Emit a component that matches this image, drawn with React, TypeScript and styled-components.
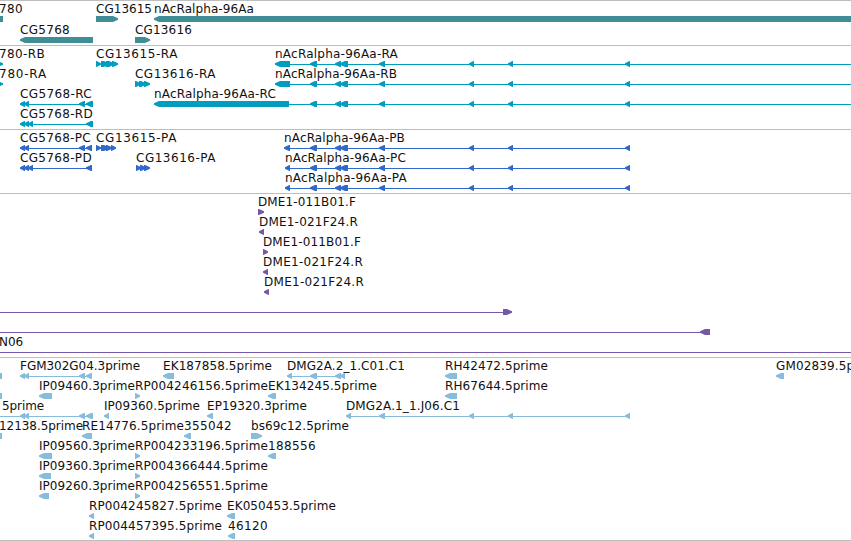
import styled, { createGlobalStyle } from "styled-components";

type Direction = "left" | "right";
type Exon = [start: number, end: number];

type Feature = {
  name?: string;
  // start and end of the label
  label?: [number, number];
  exons: Exon[];
  // intron line, defaults to the span of the exons
  line?: [number, number];
  direction?: Direction;
};

type TrackData = {
  id: string;
  color: string;
  rowGap?: number;
  bottom: number;
  rows: Feature[][];
};

const VIEW_WIDTH = 851;
const FONT = '12px "DejaVu Sans", sans-serif';

const transcriptExons: Exon[] = [
  [310, 317],
  [335, 341],
  [340, 348],
  [379, 385],
  [469, 474],
  [508, 513],
  [625, 630],
];

const tracks: TrackData[] = [
  {
    id: "genes",
    color: "#3f8e95",
    rowGap: 1,
    bottom: 3,
    rows: [
      [
        { name: "780", label: [-1, 23], exons: [[-9, 3]], direction: "left" },
        { name: "CG13615", label: [96, 152], exons: [[96, 118]], direction: "right" },
        { name: "nAcRalpha-96Aa", label: [154, 254], exons: [[154, 860]] },
      ],
      [
        { name: "CG5768", label: [20, 70], exons: [[20, 93]] },
        { name: "CG13616", label: [135, 192], exons: [[135, 150]], direction: "right" },
      ],
    ],
  },
  {
    id: "transcripts",
    color: "#009dbf",
    bottom: 3,
    rows: [
      [
        { name: "780-RB", label: [-1, 45], exons: [[-3, 3]], direction: "right" },
        {
          name: "CG13615-RA",
          label: [96, 178],
          exons: [[96, 101], [101, 109], [106, 114], [112, 118]],
          direction: "right",
        },
        {
          name: "nAcRalpha-96Aa-RA",
          label: [275, 398],
          exons: [[275, 290], ...transcriptExons],
          line: [280, 851],
        },
      ],
      [
        { name: "780-RA", label: [-1, 47], exons: [[-3, 3]], direction: "right" },
        {
          name: "CG13616-RA",
          label: [135, 216],
          exons: [[135, 141], [139, 146], [144, 150]],
          direction: "right",
        },
        {
          name: "nAcRalpha-96Aa-RB",
          label: [275, 397],
          exons: [[275, 290], ...transcriptExons],
          line: [280, 851],
        },
      ],
      [
        { name: "CG5768-RC", label: [20, 92], exons: [[20, 25], [24, 29], [79, 85], [86, 93]] },
        {
          name: "nAcRalpha-96Aa-RC",
          label: [154, 276],
          exons: [[154, 289], ...transcriptExons],
          line: [160, 851],
        },
      ],
      [{ name: "CG5768-RD", label: [20, 93], exons: [[20, 25], [24, 29], [28, 33], [86, 93]] }],
    ],
  },
  {
    id: "proteins",
    color: "#3069cb",
    bottom: 3,
    rows: [
      [
        { name: "CG5768-PC", label: [20, 91], exons: [[20, 25], [24, 29], [79, 85], [86, 92]] },
        {
          name: "CG13615-PA",
          label: [96, 177],
          exons: [[96, 101], [101, 109], [106, 112], [111, 116]],
          direction: "right",
        },
        { name: "nAcRalpha-96Aa-PB", label: [284, 405], exons: [[284, 290], ...transcriptExons] },
      ],
      [
        { name: "CG5768-PD", label: [20, 92], exons: [[20, 25], [24, 29], [28, 33], [86, 92]] },
        {
          name: "CG13616-PA",
          label: [136, 216],
          exons: [[136, 141], [140, 146], [144, 150]],
          direction: "right",
        },
        { name: "nAcRalpha-96Aa-PC", label: [285, 406], exons: [[285, 290], ...transcriptExons] },
      ],
      [{ name: "nAcRalpha-96Aa-PA", label: [285, 407], exons: [[285, 290], ...transcriptExons] }],
    ],
  },
  {
    id: "clones",
    color: "#7757a7",
    bottom: 3,
    rows: [
      [{ name: "DME1-011B01.F", label: [258, 356], exons: [[258, 264]], direction: "right" }],
      [{ name: "DME1-021F24.R", label: [259, 358], exons: [[259, 264]] }],
      [{ name: "DME1-011B01.F", label: [263, 361], exons: [[263, 268]], direction: "right" }],
      [{ name: "DME1-021F24.R", label: [263, 363], exons: [[263, 268]] }],
      [{ name: "DME1-021F24.R", label: [264, 364], exons: [[264, 269]] }],
      [{ exons: [[503, 512]], line: [0, 503], direction: "right" }],
      [{ exons: [[700, 710]], line: [0, 702] }],
      [{ name: "N06", label: [-1, 23], exons: [], line: [0, 851] }],
    ],
  },
  {
    id: "ests",
    color: "#87bcdd",
    bottom: 2,
    rows: [
      [
        { exons: [[-8, 2]] },
        { name: "FGM302G04.3prime", label: [20, 140], exons: [[20, 25], [24, 29], [79, 85], [86, 92]] },
        { name: "EK187858.5prime", label: [163, 272], exons: [[163, 174]] },
        {
          name: "DMG2A.2_1.C01.C1",
          label: [287, 405],
          exons: [[287, 292], [310, 317], [335, 341], [340, 345]],
        },
        { name: "RH42472.5prime", label: [445, 548], exons: [[445, 457]] },
        { name: "GM02839.5prime", label: [776, 882], exons: [[776, 784]] },
      ],
      [
        { exons: [[-8, 2]] },
        { name: "IP09460.3prime", label: [39, 135], exons: [[39, 52]] },
        { name: "RP004246156.5prime", label: [135, 268], exons: [[135, 140]], direction: "right" },
        { name: "EK134245.5prime", label: [268, 377], exons: [[268, 276]] },
        { name: "RH67644.5prime", label: [445, 548], exons: [[445, 457]] },
      ],
      [
        {
          name: "5prime",
          label: [2, 44],
          exons: [[20, 25], [24, 29], [79, 85], [86, 93]],
          line: [0, 93],
        },
        { name: "IP09360.5prime", label: [104, 200], exons: [[104, 109]] },
        { name: "EP19320.3prime", label: [207, 307], exons: [[207, 213]] },
        {
          name: "DMG2A.1_1.J06.C1",
          label: [346, 460],
          exons: [[346, 351], [379, 385], [469, 474], [508, 513], [625, 630]],
        },
      ],
      [
        { name: "12138.5prime", label: [-1, 83], exons: [[-8, 2]] },
        { name: "RE14776.5prime", label: [82, 184], exons: [[82, 92]] },
        { name: "355042", label: [184, 232], exons: [[184, 191]] },
        { name: "bs69c12.5prime", label: [251, 349], exons: [[251, 262]], direction: "right" },
      ],
      [
        { name: "IP09560.3prime", label: [39, 135], exons: [[39, 52]] },
        { name: "RP004233196.5prime", label: [135, 268], exons: [[135, 140]], direction: "right" },
        { name: "188556", label: [268, 316], exons: [[268, 276]] },
      ],
      [
        { name: "IP09360.3prime", label: [39, 135], exons: [[39, 51]] },
        { name: "RP004366444.5prime", label: [135, 268], exons: [[135, 140]], direction: "right" },
      ],
      [
        { name: "IP09260.3prime", label: [39, 135], exons: [[39, 49]] },
        { name: "RP004256551.5prime", label: [135, 268], exons: [[135, 140]], direction: "right" },
      ],
      [
        { name: "RP004245827.5prime", label: [89, 222], exons: [[89, 94]] },
        { name: "EK050453.5prime", label: [227, 336], exons: [[227, 235]] },
      ],
      [
        { name: "RP004457395.5prime", label: [89, 222], exons: [[89, 94]] },
        { name: "46120", label: [228, 268], exons: [[228, 235]] },
      ],
    ],
  },
];

const canvas = document.createElement("canvas").getContext("2d");

// letter spacing that makes the name fill its span
const fitSpacing = (name: string, width: number) => {
  if (!canvas) return 0;
  canvas.font = FONT;
  return (width - canvas.measureText(name).width) / name.length;
};

const exonPoints = ([start, end]: Exon, direction: Direction) => {
  const head = Math.min(5, end - start - 0.5);
  if (direction === "right") {
    const neck = end - head;
    return `${start},0 ${neck},0 ${end},2.3 ${end},3.7 ${neck},6 ${start},6`;
  }
  const neck = start + head;
  return `${end},0 ${neck},0 ${start},2.3 ${start},3.7 ${neck},6 ${end},6`;
};

const FeatureGlyph = ({ feature }: { feature: Feature }) => {
  const { exons, direction = "left" } = feature;
  const line = feature.line ?? [exons[0][0] + 2, exons[exons.length - 1][1] - 2];
  return (
    <g>
      {(exons.length > 1 || feature.line) && (
        <IntronLine x={line[0]} y={3} width={line[1] - line[0]} height={1} />
      )}
      {exons.map((exon) => (
        <polygon key={exon[0]} points={exonPoints(exon, direction)} />
      ))}
    </g>
  );
};

const FeatureRow = ({ features }: { features: Feature[] }) => (
  <Row>
    <Labels>
      {features.map(
        ({ name, label }) =>
          name &&
          label && (
            <Label
              key={label[0]}
              style={{ left: label[0], letterSpacing: fitSpacing(name, label[1] - label[0]) }}
            >
              {name}
            </Label>
          )
      )}
    </Labels>
    <Glyphs width={VIEW_WIDTH} height={6}>
      {features.map((feature, i) => (
        <FeatureGlyph key={i} feature={feature} />
      ))}
    </Glyphs>
  </Row>
);

const App = () => (
  <>
    <GlobalStyle />
    <Browser>
      {tracks.map((track) => (
        <Track key={track.id} $color={track.color} $gap={track.rowGap ?? 0} $bottom={track.bottom}>
          {track.rows.map((features, i) => (
            <FeatureRow key={i} features={features} />
          ))}
        </Track>
      ))}
    </Browser>
  </>
);

export default App;

const GlobalStyle = createGlobalStyle`
  body {
    margin: 0;
    background: #fff;
    overflow: hidden;
  }
`;

const Browser = styled.main`
  display: flex;
  flex-direction: column;
  width: ${VIEW_WIDTH}px;
  height: 541px;
  box-sizing: border-box;
  border-bottom: 1px solid #bebebe;
  overflow: hidden;
`;

const Track = styled.section<{ $color: string; $gap: number; $bottom: number }>`
  display: flex;
  flex: none;
  flex-direction: column;
  gap: ${(props) => props.$gap}px;
  padding-bottom: ${(props) => props.$bottom}px;
  border-top: 1px solid #bebebe;
  color: ${(props) => props.$color};
`;

// the glyphs reach one pixel into the next row
const Row = styled.div`
  display: flex;
  flex: none;
  flex-direction: column;
  height: 20px;
`;

const Labels = styled.div`
  position: relative;
  flex: none;
  height: 15px;
`;

// names sit at their genomic coordinate
const Label = styled.span`
  position: absolute;
  top: 0;
  font: ${FONT};
  line-height: 16px;
  color: #111;
  white-space: nowrap;
`;

const Glyphs = styled.svg`
  display: block;
  flex: none;
  fill: currentColor;
`;

const IntronLine = styled.rect`
  fill: currentColor;
  shape-rendering: crispEdges;
`;
